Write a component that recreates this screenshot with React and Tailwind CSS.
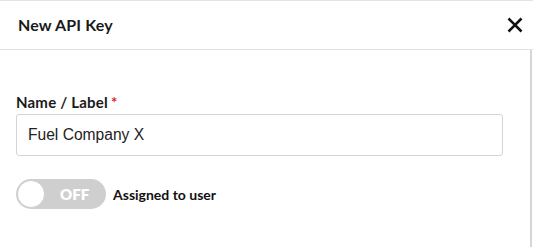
import React from "react";

export default function App() {
  return (
    <div className="w-[533px] h-[247px] bg-white overflow-hidden flex flex-col">
      <div className="h-[50px] shrink-0 border-t border-b border-[#e3e3e3] flex items-center justify-between pl-[18px] pr-[10px]">
        <span className="text-[16px] font-bold text-[#1a1a1a] font-['Lato',sans-serif] tracking-[0.15px]">New API Key</span>
        <svg width="16" height="16" viewBox="0 0 16 16">
          <path d="M1.5 1.5 L14.5 14.5 M14.5 1.5 L1.5 14.5" stroke="#111" strokeWidth="2.6" strokeLinecap="butt" />
        </svg>
      </div>
      <div className="flex-1 w-[532px] border-r-2 border-[#d6d6d6] pl-[16px] pt-[43px]">
        <label className="block text-[15px] font-bold text-[#1a1a1a] font-['Lato',sans-serif] leading-[19px] tracking-[0.2px]">
          Name / Label<span className="ml-[3px] text-[#e02424]">*</span>
        </label>
        <div className="mt-[2px] w-[487px] h-[42px] border border-[#d4d4d4] rounded-[3px] flex items-center pl-[11px]">
          <span className="text-[15.6px] text-[#222] font-['Liberation_Sans',Arial,sans-serif]">Fuel Company X</span>
        </div>
        <div className="mt-[23px] flex items-center gap-[7px]">
          <div className="relative w-[90px] h-[30px] rounded-full bg-[#cfcfcf] flex items-center">
            <div className="absolute left-[1px] top-[1px] w-[28px] h-[28px] rounded-full bg-white border border-[#d0d0d0]" />
            <span className="ml-[44px] text-[15px] font-extrabold text-white font-['Lato',sans-serif]">OFF</span>
          </div>
          <span className="text-[14px] font-bold text-[#111] font-['Lato',sans-serif]">Assigned to user</span>
        </div>
      </div>
    </div>
  );
}
